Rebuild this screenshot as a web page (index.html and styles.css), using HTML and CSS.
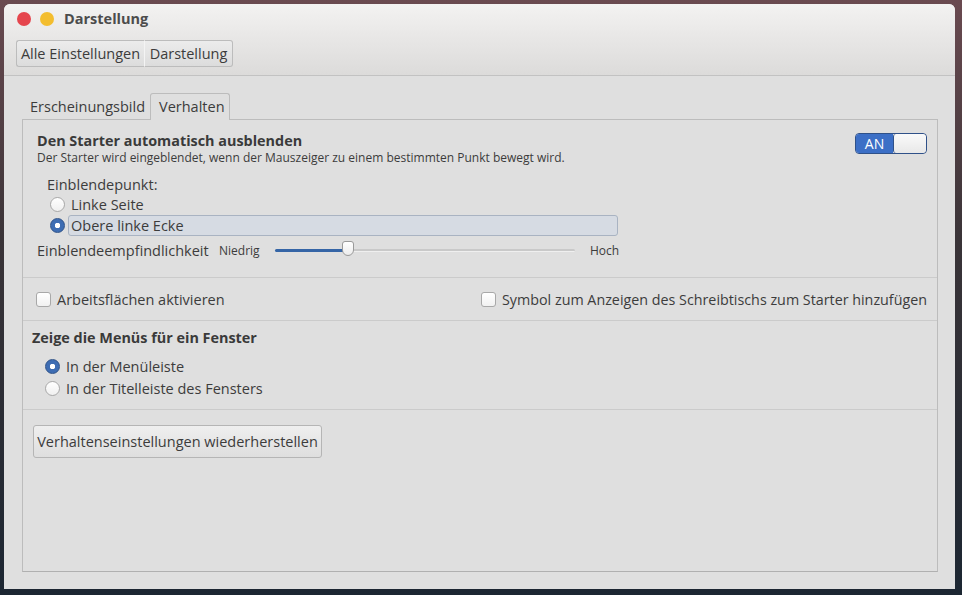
FILE: index.html
```html
<!DOCTYPE html>
<html lang="de">
<head>
<meta charset="utf-8">
<title>Darstellung</title>
<link rel="stylesheet" href="styles.css">
</head>
<body>
<div class="window">
  <header class="header">
    <div class="titlebar">
      <span class="wbtn close"></span>
      <span class="wbtn min"></span>
      <span class="title">Darstellung</span>
    </div>
    <div class="crumbs">
      <button class="crumb">Alle Einstellungen</button><button class="crumb">Darstellung</button>
    </div>
  </header>
  <main class="content">
    <div class="tabs">
      <div class="tab">Erscheinungsbild</div>
      <div class="tab active">Verhalten</div>
    </div>
    <div class="panel">
      <section class="sec sec1">
        <div class="head">
          <div>
            <div class="h">Den Starter automatisch ausblenden</div>
            <div class="sub">Der Starter wird eingeblendet, wenn der Mauszeiger zu einem bestimmten Punkt bewegt wird.</div>
          </div>
          <div class="switch"><span class="on">AN</span><span class="knob"></span></div>
        </div>
        <div class="label">Einblendepunkt:</div>
        <div class="radio r1"><span class="dot"></span><span>Linke Seite</span></div>
        <div class="radio r2 sel"><span class="dot"></span><span class="hl">Obere linke Ecke</span></div>
        <div class="slider-row">
          <span class="slabel">Einblendeempfindlichkeit</span>
          <span class="small low">Niedrig</span>
          <span class="track"><span class="fill"></span><span class="thumb"></span></span>
          <span class="small">Hoch</span>
        </div>
      </section>
      <section class="sec sec2">
        <label class="check"><span class="box"></span>Arbeitsflächen aktivieren</label>
        <label class="check"><span class="box"></span>Symbol zum Anzeigen des Schreibtischs zum Starter hinzufügen</label>
      </section>
      <section class="sec sec3">
        <div class="h">Zeige die Menüs für ein Fenster</div>
        <div class="radio r3 sel"><span class="dot"></span><span>In der Menüleiste</span></div>
        <div class="radio r4"><span class="dot"></span><span>In der Titelleiste des Fensters</span></div>
      </section>
      <section class="sec sec4">
        <button class="reset">Verhaltenseinstellungen wiederherstellen</button>
      </section>
    </div>
  </main>
</div>
</body>
</html>
```

FILE: styles.css
```css
* { box-sizing: border-box; }
html, body { margin: 0; height: 100%; }
body {
  width: 962px; height: 595px; overflow: hidden;
  background: linear-gradient(180deg, #6a4a50 0%, #3a3438 40%, #1c2632 100%);
  font-family: "Open Sans", "DejaVu Sans", sans-serif;
  color: #3c3c3c;
  padding: 4px 7px 6px 4px;
}
.window {
  width: 951px; height: 585px;
  background: #dfdfdf;
  border-radius: 6px 6px 0 0;
  overflow: hidden;
  display: flex; flex-direction: column;
}
.header {
  height: 72px;
  background: linear-gradient(#f3f2f1, #dcdbda);
  border-bottom: 1px solid #c2c2c2;
  padding: 0 0 0 12px;
}
.titlebar { height: 29px; display: flex; align-items: center; }
.wbtn { width: 14px; height: 14px; border-radius: 50%; display: inline-block; }
.close { background: #e5454d; margin-left: 1px; }
.min { background: #f3bd2e; margin-left: 9px; }
.title { margin-left: 10px; font-weight: bold; font-size: 14.5px; color: #4c4c4c; }
.crumbs { margin-top: 7px; display: flex; }
.crumb {
  font: inherit; font-size: 14.5px; color: #3c3c3c;
  height: 27px; padding: 0;
  white-space: nowrap;
  background: linear-gradient(#ececec, #dcdcdc);
  border: 1px solid #bcbcbc;
  margin: 0;
}
.crumb:first-child { border-radius: 3px 0 0 3px; border-right: 1px solid #f4f4f4; width: 129px; }
.crumb:last-child { border-radius: 0 3px 3px 0; border-left: none; width: 88px; }
.content { padding: 17px 17px 17px 18px; flex: 1; display: flex; flex-direction: column; }
.tabs { display: flex; height: 27px; margin-bottom: -1px; position: relative; z-index: 1; }
.tab { font-size: 14.5px; padding: 4px 8px 0 8px; height: 27px; width: 128px; white-space: nowrap; }
.tab.active {
  width: 80px; padding-top: 3px;
  border: 1px solid #bcbcbc; border-bottom: none;
  border-radius: 3px 3px 0 0; background: #dfdfdf;
}
.panel {
  flex: 1;
  border: 1px solid #bcbcbc;
  border-bottom-color: #b0b0b0;
}
.sec { border-bottom: 1px solid #cbcbcb; }
.sec4 { border-bottom: none; }
.sec1 { height: 158px; padding: 13px 10px 0 14px; }
.head { display: flex; justify-content: space-between; align-items: flex-start; }
.h { font-weight: bold; font-size: 14.4px; line-height: 16px; color: #3a3a3a; }
.sub { font-size: 12px; line-height: 16px; margin-top: 1px; }
.switch {
  width: 72px; height: 21px; display: flex; flex: none;
  border: 1px solid #2f5189; border-radius: 4px; overflow: hidden;
}
.switch .on {
  width: 37px; background: #3c6fc6; color: #fff; font-size: 14px;
  display: flex; align-items: center; justify-content: center;
}
.switch .knob { flex: 1; background: linear-gradient(#fafafa, #e8e8e8); border-left: 1px solid #2f5189; border-radius: 3px; }
.label { font-size: 14.5px; line-height: 16px; margin: 11px 0 0 10px; }
.radio { display: flex; align-items: center; font-size: 14.5px; }
.dot {
  width: 15px; height: 15px; border-radius: 50%;
  background: linear-gradient(#ffffff, #f0f0f0);
  border: 1px solid #a8a8a8; flex: none;
}
.sel .dot {
  background: radial-gradient(circle, #ffffff 0 2.5px, #3e6db3 3px);
  border-color: #2e5288;
}
.r1 { height: 20px; margin: 1px 0 0 13px; }
.r1 .dot, .r2 .dot { margin-right: 6px; }
.r2 { height: 21px; margin: 1px 0 0 13px; }
.hl {
  width: 550px; height: 21px; display: flex; align-items: center;
  padding-left: 2px; margin-left: -3px;
  background: #d6dbe3; border: 1px solid #a9b3c2; border-radius: 3px;
}
.slider-row { display: flex; align-items: center; height: 20px; margin-top: 4px; }
.slider-row > * { flex: none; }
.slabel { font-size: 14.5px; width: 182px; white-space: nowrap; overflow: hidden; }
.small { font-size: 12px; }
.low { width: 56px; }
.track {
  position: relative; width: 300px; height: 3px; margin-right: 15px;
  background: #c9c9c9; border-radius: 2px; border-bottom: 1px solid #efefef;
}
.fill { position: absolute; left: 0; top: 0; width: 73px; height: 3px; background: #3565a6; border-radius: 2px; }
.thumb {
  position: absolute; left: 67px; top: -8px; width: 12px; height: 15px;
  background: linear-gradient(#ffffff, #ececec);
  border: 1px solid #9a9a9a;
  border-radius: 3px 3px 50% 50% / 3px 3px 40% 40%;
}
.sec2 { height: 43px; display: flex; justify-content: space-between; align-items: center; padding: 0 10px 0 13px; }
.check { display: flex; align-items: center; font-size: 14.5px; white-space: nowrap; }
.check:last-child { font-size: 14.3px; }
.box {
  width: 15px; height: 15px; border: 1px solid #a8a8a8; border-radius: 3px;
  background: linear-gradient(#ffffff, #f1f1f1); margin-right: 6px;
}
.sec3 { height: 89px; padding: 9px 0 0 9px; }
.r3 { height: 22px; margin: 9px 0 0 13px; }
.r4 { height: 22px; margin: 0 0 0 13px; }
.r3 .dot, .r4 .dot { margin-right: 6px; }
.sec4 { padding: 15px 0 0 10px; }
.reset {
  font: inherit; font-size: 14.5px; color: #3c3c3c;
  width: 289px; height: 33px; margin: 0; padding: 0;
  white-space: nowrap;
  background: linear-gradient(#efefef, #dedede);
  border: 1px solid #b5b5b5; border-radius: 3px;
}
```
